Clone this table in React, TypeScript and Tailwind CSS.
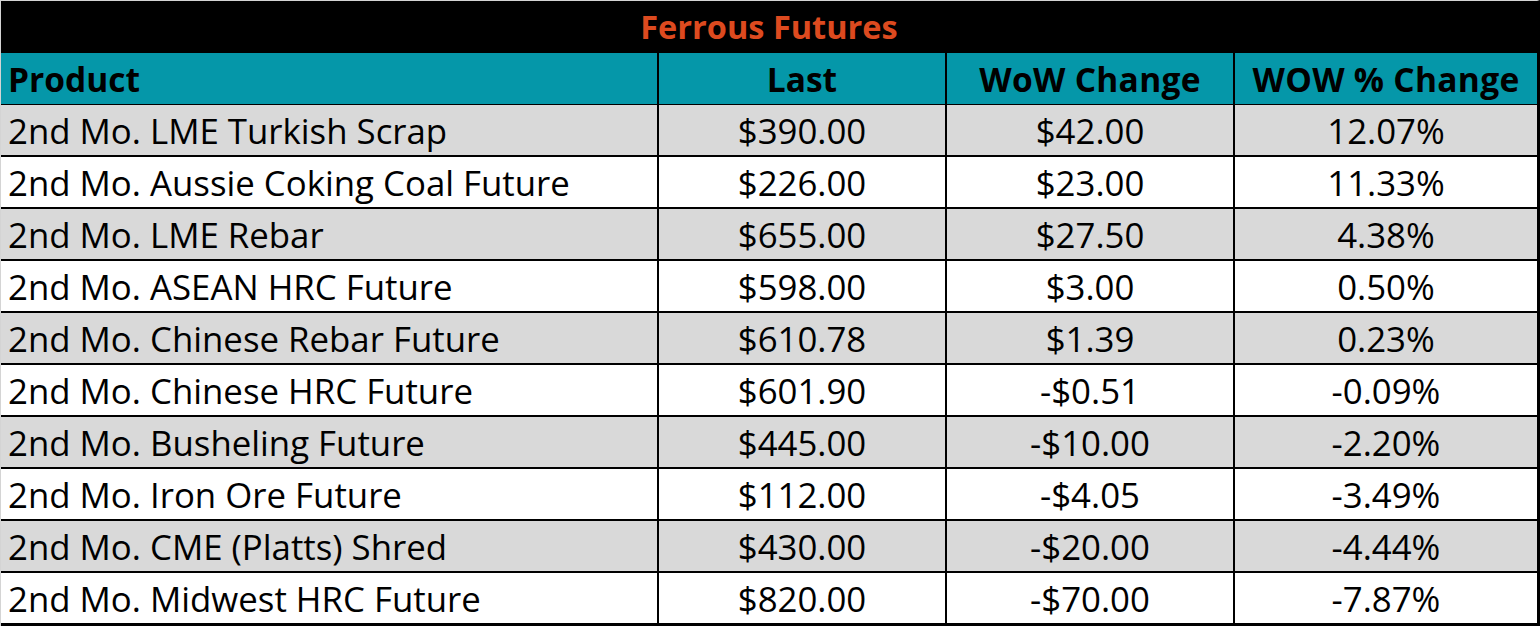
import React from 'react';

type Row = { product: string; last: string; change: string; pct: string };

const rows: Row[] = [
  { product: '2nd Mo. LME Turkish Scrap', last: '$390.00', change: '$42.00', pct: '12.07%' },
  { product: '2nd Mo. Aussie Coking Coal Future', last: '$226.00', change: '$23.00', pct: '11.33%' },
  { product: '2nd Mo. LME Rebar', last: '$655.00', change: '$27.50', pct: '4.38%' },
  { product: '2nd Mo. ASEAN HRC Future', last: '$598.00', change: '$3.00', pct: '0.50%' },
  { product: '2nd Mo. Chinese Rebar Future', last: '$610.78', change: '$1.39', pct: '0.23%' },
  { product: '2nd Mo. Chinese HRC Future', last: '$601.90', change: '-$0.51', pct: '-0.09%' },
  { product: '2nd Mo. Busheling Future', last: '$445.00', change: '-$10.00', pct: '-2.20%' },
  { product: '2nd Mo. Iron Ore Future', last: '$112.00', change: '-$4.05', pct: '-3.49%' },
  { product: '2nd Mo. CME (Platts) Shred', last: '$430.00', change: '-$20.00', pct: '-4.44%' },
  { product: '2nd Mo. Midwest HRC Future', last: '$820.00', change: '-$70.00', pct: '-7.87%' },
];

const App: React.FC = () => {
  return (
    <div className="w-[1540px] h-[626px] bg-white font-['Open_Sans',sans-serif] text-black">
      <div className="border-t border-t-[#d4d4d4] border-l border-l-[#d4d4d4] border-r-[3px] border-r-black">
        {/* title */}
        <div className="h-[52px] bg-black flex items-center justify-center">
          <span className="text-[32.5px] font-bold text-[#dd4a1f] leading-none">Ferrous Futures</span>
        </div>

        {/* header */}
        <div className="flex h-[52px] bg-[#0597a9] border-b border-black font-bold text-[33.5px] leading-none">
          <div className="w-[656px] flex items-center pl-[7px] pt-[3px]">Product</div>
          <div className="w-[288px] border-l-2 border-black flex items-center justify-center pt-[3px]">Last</div>
          <div className="w-[288px] border-l-2 border-black flex items-center justify-center pt-[3px] tracking-[0.3px]">WoW Change</div>
          <div className="flex-1 border-l-2 border-black flex items-center justify-center pt-[3px] tracking-[0.3px]">WOW % Change</div>
        </div>

        {/* data rows */}
        {rows.map((r, i) => (
          <div
            key={i}
            className={`flex text-[34.8px] leading-none border-black ${
              i % 2 === 0 ? 'bg-[#d9d9d9]' : 'bg-white'
            } ${i === rows.length - 1 ? 'h-[53px] border-b-[3px]' : 'h-[52px] border-b-2'}`}
          >
            <div className="w-[656px] flex items-center pl-[7px] pt-[3px] whitespace-nowrap">{r.product}</div>
            <div className="w-[288px] border-l-2 border-black flex items-center justify-center pt-[3px]">{r.last}</div>
            <div className="w-[288px] border-l-2 border-black flex items-center justify-center pt-[3px]">{r.change}</div>
            <div className="flex-1 border-l-2 border-black flex items-center justify-center pt-[3px]">{r.pct}</div>
          </div>
        ))}
      </div>
    </div>
  );
};

export default App;
